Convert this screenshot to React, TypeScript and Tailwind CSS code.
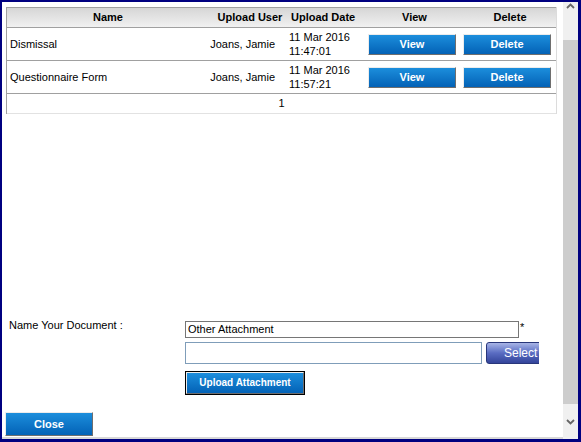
import React from 'react'

const files = [
    { name: 'Dismissal', user: 'Joans, Jamie', date: '11 Mar 2016', time: '11:47:01' },
    { name: 'Questionnaire Form', user: 'Joans, Jamie', date: '11 Mar 2016', time: '11:57:21' },
]

const BlueButton = ({ children, className = '' }: { children: React.ReactNode; className?: string }) => (
    <button
        className={
            'border border-t-[#ececec] border-l-[#ececec] border-r-[#6e6e6e] border-b-[#6e6e6e] bg-linear-to-b from-[#1c8edc] to-[#0462b6] font-bold whitespace-nowrap text-white leading-none ' +
            className
        }
    >
        {children}
    </button>
)

const Chevron = ({ down }: { down?: boolean }) => (
    <svg width="9" height="6" viewBox="0 0 9 6" className="block">
        <polyline
            points={down ? '1,1 4.5,4.5 8,1' : '1,5 4.5,1.5 8,5'}
            fill="none"
            stroke="#666"
            strokeWidth="1.8"
        />
    </svg>
)

export default function App() {
    return (
        <div className="flex h-[442px] w-[581px] bg-[#000080] pt-[2px] pr-[3px] pb-[3px] pl-[2px] font-['Liberation_Sans',Arial,sans-serif] text-[11px] text-black">
            <div className="flex flex-1 flex-col bg-white">
                {/* grid */}
                <div className="mt-[5px] ml-[4px] w-[551px] border-l border-r border-l-[#a0a0a0] border-r-[#dcdcdc]">
                    <div className="grid h-[21px] grid-cols-[202px_80px_78px_95px_96px] items-center border-t border-b border-[#a0a0a0] bg-linear-to-b from-[#d6d6d6] to-[#f1f1f1] font-bold whitespace-nowrap">
                        <div className="text-center">Name</div>
                        <div className="pl-[2px] text-center">Upload User</div>
                        <div className="pl-[2px] text-left">Upload Date</div>
                        <div className="text-center">View</div>
                        <div className="text-center">Delete</div>
                    </div>
                    {files.map((f) => (
                        <div
                            key={f.name}
                            className="grid h-[33px] grid-cols-[202px_80px_78px_95px_96px] items-center border-b border-[#a0a0a0]"
                        >
                            <div className="pl-[3px]">{f.name}</div>
                            <div className="pr-[14px] text-right whitespace-nowrap">{f.user}</div>
                            <div className="leading-[14px]">
                                {f.date}
                                <br />
                                {f.time}
                            </div>
                            <div className="pl-[1px]">
                                <BlueButton className="h-[21px] w-[88px] text-[11px]">View</BlueButton>
                            </div>
                            <div className="pl-[1px]">
                                <BlueButton className="h-[21px] w-[88px] text-[11px]">Delete</BlueButton>
                            </div>
                        </div>
                    ))}
                    <div className="flex h-[20px] items-center justify-center border-b border-[#e2e2e2]">1</div>
                </div>

                {/* upload form */}
                <div className="mt-[207px] flex">
                    <div className="-mt-[4px] w-[183px] pl-[7px]">Name Your Document :</div>
                    <div className="flex flex-col">
                        <div className="flex items-start">
                            <div className="flex h-[17px] w-[334px] items-center border border-[#767676] pl-[2px]">
                                Other Attachment
                            </div>
                            <span className="ml-[1px] leading-[12px]">*</span>
                        </div>
                        <div className="mt-[4px] flex">
                            <div className="h-[22px] w-[297px] border border-[#7f9db9]" />
                            <div className="ml-[4px] w-[53px] overflow-hidden">
                                <button className="h-[22px] w-[62px] rounded-[3px] border border-[#28367a] bg-linear-to-b from-[#a8b4e6] via-[#5a6cc2] to-[#34449a] pl-[17px] text-left text-[12px] text-white">
                                    Select
                                </button>
                            </div>
                        </div>
                        <div className="mt-[7px]">
                            <div className="inline-block border border-black">
                                <BlueButton className="h-[22px] w-[118px] text-[10px]">Upload Attachment</BlueButton>
                            </div>
                        </div>
                    </div>
                </div>

                <div className="mt-[17px] pl-[3px]">
                    <BlueButton className="h-[24px] w-[88px] text-[11px]">Close</BlueButton>
                </div>
                <div className="mt-auto h-[2px] bg-[#d8d8d8]" />
            </div>

            {/* scrollbar */}
            <div className="flex w-[15px] flex-col bg-[#f0f0f0]">
                <div className="flex h-[12px] items-start justify-center pt-[1px]">
                    <Chevron />
                </div>
                <div className="h-[26px]" />
                <div className="h-[364px] bg-[#cdcdcd]" />
                <div className="flex flex-1 items-center justify-center">
                    <Chevron down />
                </div>
            </div>
        </div>
    )
}
